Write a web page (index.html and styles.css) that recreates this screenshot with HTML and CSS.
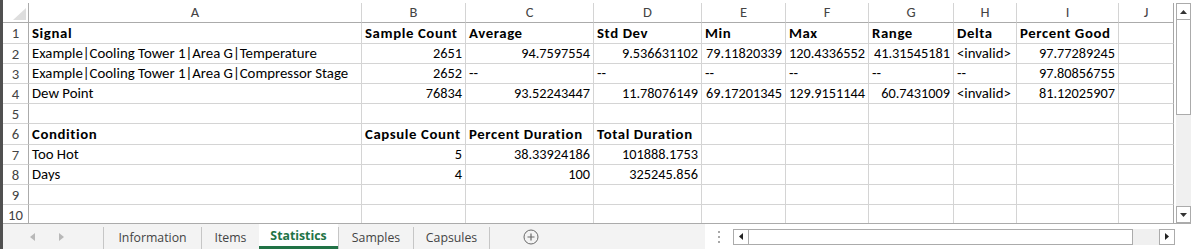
FILE: index.html
```html
<!DOCTYPE html>
<html>
<head>
<meta charset="utf-8">
<link rel="stylesheet" href="styles.css">
</head>
<body>
<div class="app">
  <div class="main">
    <div class="grid">
      <div class="corner"><svg width="13" height="12" viewBox="0 0 13 12"><polygon points="13,0 13,12 0,12" fill="#dedede"/></svg></div>
      <div class="ch">A</div><div class="ch">B</div><div class="ch">C</div><div class="ch">D</div><div class="ch">E</div><div class="ch">F</div><div class="ch">G</div><div class="ch">H</div><div class="ch">I</div><div class="ch last">J</div>

      <div class="rh">1</div>
      <div class="c b">Signal</div><div class="c b">Sample Count</div><div class="c b">Average</div><div class="c b">Std Dev</div><div class="c b">Min</div><div class="c b">Max</div><div class="c b">Range</div><div class="c b">Delta</div><div class="c b">Percent Good</div><div class="c last"></div>

      <div class="rh">2</div>
      <div class="c">Example|Cooling Tower 1|Area G|Temperature</div><div class="c n">2651</div><div class="c n">94.7597554</div><div class="c n">9.536631102</div><div class="c n">79.11820339</div><div class="c n">120.4336552</div><div class="c n">41.31545181</div><div class="c">&lt;invalid&gt;</div><div class="c n">97.77289245</div><div class="c last"></div>

      <div class="rh">3</div>
      <div class="c">Example|Cooling Tower 1|Area G|Compressor Stage</div><div class="c n">2652</div><div class="c">--</div><div class="c">--</div><div class="c">--</div><div class="c">--</div><div class="c">--</div><div class="c">--</div><div class="c n">97.80856755</div><div class="c last"></div>

      <div class="rh">4</div>
      <div class="c">Dew Point</div><div class="c n">76834</div><div class="c n">93.52243447</div><div class="c n">11.78076149</div><div class="c n">69.17201345</div><div class="c n">129.9151144</div><div class="c n">60.7431009</div><div class="c">&lt;invalid&gt;</div><div class="c n">81.12025907</div><div class="c last"></div>

      <div class="rh">5</div>
      <div class="c"></div><div class="c"></div><div class="c"></div><div class="c"></div><div class="c"></div><div class="c"></div><div class="c"></div><div class="c"></div><div class="c"></div><div class="c last"></div>

      <div class="rh">6</div>
      <div class="c b">Condition</div><div class="c b">Capsule Count</div><div class="c b">Percent Duration</div><div class="c b">Total Duration</div><div class="c"></div><div class="c"></div><div class="c"></div><div class="c"></div><div class="c"></div><div class="c last"></div>

      <div class="rh">7</div>
      <div class="c">Too Hot</div><div class="c n">5</div><div class="c n">38.33924186</div><div class="c n">101888.1753</div><div class="c"></div><div class="c"></div><div class="c"></div><div class="c"></div><div class="c"></div><div class="c last"></div>

      <div class="rh">8</div>
      <div class="c">Days</div><div class="c n">4</div><div class="c n">100</div><div class="c n">325245.856</div><div class="c"></div><div class="c"></div><div class="c"></div><div class="c"></div><div class="c"></div><div class="c last"></div>

      <div class="rh">9</div>
      <div class="c"></div><div class="c"></div><div class="c"></div><div class="c"></div><div class="c"></div><div class="c"></div><div class="c"></div><div class="c"></div><div class="c"></div><div class="c last"></div>

      <div class="rh">10</div>
      <div class="c"></div><div class="c"></div><div class="c"></div><div class="c"></div><div class="c"></div><div class="c"></div><div class="c"></div><div class="c"></div><div class="c"></div><div class="c last"></div>
    </div>
    <div class="vscroll">
      <div class="vbtn"><svg width="7" height="4" viewBox="0 0 7 4"><polygon points="0,4 7,4 3.5,0" fill="#333"/></svg></div>
      <div class="vthumb"></div>
      <div class="vtrack"></div>
      <div class="vbtn"><svg width="7" height="4" viewBox="0 0 7 4"><polygon points="0,0 7,0 3.5,4" fill="#333"/></svg></div>
    </div>
  </div>
  <div class="tabbar">
    <div class="nav">
      <svg width="5" height="8" viewBox="0 0 5 8"><polygon points="5,0 5,8 0,4" fill="#b8b8b8"/></svg>
      <svg width="5" height="8" viewBox="0 0 5 8"><polygon points="0,0 0,8 5,4" fill="#b8b8b8"/></svg>
    </div>
    <div class="tab t-info">Information</div>
    <div class="tab t-items">Items</div>
    <div class="tab active t-stats">Statistics</div>
    <div class="tab t-samples">Samples</div>
    <div class="tab t-caps">Capsules</div>
    <div class="addwrap">
      <svg width="16" height="16" viewBox="0 0 16 16"><circle cx="8" cy="8" r="7" fill="none" stroke="#6a6a6a" stroke-width="1"/><path d="M8 4.5v7M4.5 8h7" stroke="#6a6a6a" stroke-width="1.2"/></svg>
    </div>
    <div class="spacer"></div>
    <div class="splitter"><span></span><span></span><span></span></div>
    <div class="hscroll">
      <div class="hbtn"><svg width="4" height="7" viewBox="0 0 4 7"><polygon points="4,0 4,7 0,3.5" fill="#222"/></svg></div>
      <div class="hthumb"></div>
      <div class="htrack"></div>
      <div class="hbtn"><svg width="4" height="7" viewBox="0 0 4 7"><polygon points="0,0 0,7 4,3.5" fill="#222"/></svg></div>
    </div>
  </div>
</div>
</body>
</html>
```
FILE: styles.css
```css
html, body {
  margin: 0;
  padding: 0;
  background: #ffffff;
}
body {
  width: 1191px;
  height: 249px;
  overflow: hidden;
  font-family: Carlito, Calibri, Lato, "Liberation Sans", sans-serif;
}
.app {
  box-sizing: border-box;
  width: 1191px;
  height: 249px;
  border-left: 3px solid #505050;
  display: flex;
  flex-direction: column;
}
.main {
  box-sizing: border-box;
  height: 223px;
  padding-top: 3px;
  display: flex;
}
.grid {
  display: grid;
  grid-template-columns: 26px 333px 104px 128px 108px 84px 83px 85px 63px 102px 55px;
  grid-template-rows: 20px 21px 20px 20px 20px 20px 21px 20px 20px 20px 20px;
  width: 1171px;
  height: 220px;
  overflow: hidden;
}
.grid > div {
  box-sizing: border-box;
  border-right: 1px solid #d4d4d4;
  border-bottom: 1px solid #d4d4d4;
  white-space: nowrap;
}
.grid > .corner {
  border-right: 1px solid #ababab;
  border-bottom: 1px solid #ababab;
  display: flex;
  align-items: flex-end;
  justify-content: flex-end;
  padding: 0 2px 2px 0;
}
.corner svg { display: block; }
.grid > .ch {
  border-bottom: 1px solid #ababab;
  color: #444444;
  font-size: 14.5px;
  text-align: center;
  line-height: 19px;
}
.grid > .rh {
  border-right: 1px solid #ababab;
  color: #444444;
  font-size: 14.7px;
  text-align: center;
  line-height: 19px;
  padding-top: 1px;
}
.grid > .c {
  color: #000000;
  font-size: 14.8px;
  padding: 0 3px;
  display: flex;
  align-items: flex-end;
  line-height: 17px;
  padding-bottom: 1px;
}
.grid > .c.n {
  justify-content: flex-end;
  font-size: 14.3px;
}
.grid > .c.b {
  font-weight: bold;
  letter-spacing: 0.6px;
}
.grid > .last {
  border-right: 1px solid #a6a6a6;
}
.vscroll {
  margin-left: 2px;
  width: 15px;
  height: 220px;
  box-sizing: border-box;
  display: flex;
  flex-direction: column;
  background: #f0f0f0;
}
.vbtn {
  box-sizing: border-box;
  height: 17px;
  border: 1px solid #ababab;
  background: #ffffff;
  display: flex;
  align-items: center;
  justify-content: center;
}
.vthumb {
  box-sizing: border-box;
  height: 95px;
  background: #ffffff;
  border: 1px solid #ababab;
  border-top: none;
}
.vtrack {
  flex: 1;
}
.tabbar {
  box-sizing: border-box;
  height: 26px;
  border-top: 1px solid #ababab;
  background: #f3f3f3;
  display: flex;
  align-items: stretch;
  font-family: "Open Sans", "Noto Sans", sans-serif;
  font-size: 12.3px;
  color: #444444;
}
.nav {
  width: 100px;
  display: flex;
  align-items: center;
  gap: 24px;
  padding-left: 27px;
  box-sizing: border-box;
}
.nav svg { display: block; }
.tab {
  box-sizing: border-box;
  border-left: 1px solid #c6c6c6;
  margin: 3px 0 0;
  display: flex;
  align-items: center;
  justify-content: center;
  padding-bottom: 2px;
}
.t-info { width: 98px; }
.t-items { width: 58px; }
.t-stats { width: 79px; }
.t-samples { width: 75px; }
.t-caps { width: 77px; border-right: 1px solid #c6c6c6; }
.tab.active {
  background: #ffffff;
  color: #217346;
  font-weight: bold;
  border-bottom: 3px solid #217346;
  padding-bottom: 0;
  border-left: none;
  margin-top: 0;
  padding-top: 1px;
}
.addwrap {
  width: 81px;
  display: flex;
  align-items: center;
  justify-content: center;
}
.addwrap svg { display: block; }
.spacer {
  flex: 1;
}
.splitter {
  width: 28px;
  background: #ffffff;
  display: flex;
  flex-direction: column;
  align-items: center;
  justify-content: center;
  gap: 3px;
}
.splitter span {
  width: 2px;
  height: 2px;
  background: #a8a8a8;
}
.hscroll {
  width: 442px;
  display: flex;
  align-items: center;
  background: #ffffff;
  padding-right: 16px;
}
.hbtn {
  box-sizing: border-box;
  width: 16px;
  height: 16px;
  border: 1px solid #ababab;
  background: #ffffff;
  display: flex;
  align-items: center;
  justify-content: center;
}
.hthumb {
  box-sizing: border-box;
  width: 384px;
  height: 16px;
  border: 1px solid #ababab;
  border-left: none;
  background: #ffffff;
}
.htrack {
  width: 26px;
  height: 16px;
  background: #f0f0f0;
}
```
